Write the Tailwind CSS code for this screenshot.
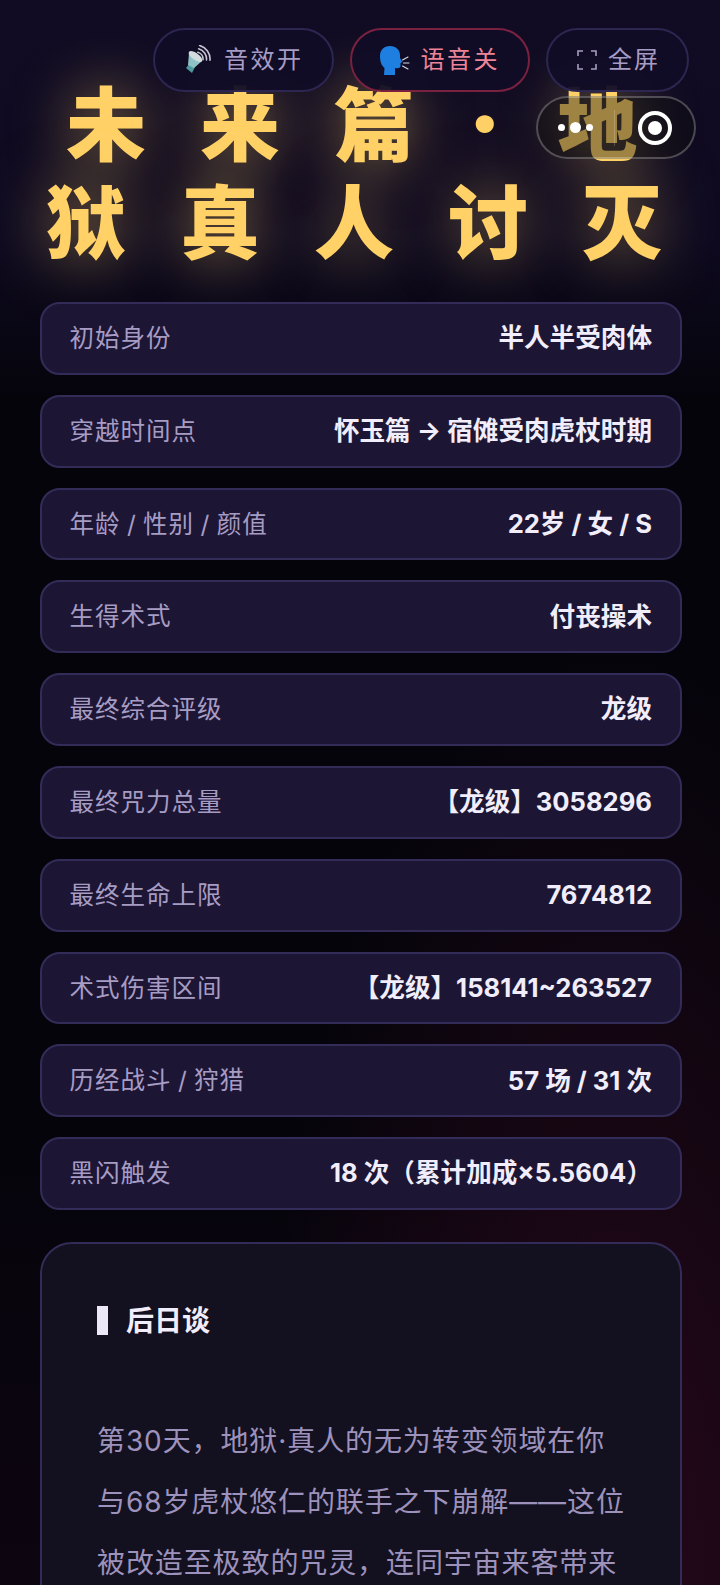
<!DOCTYPE html>
<html lang="zh-CN">
<head>
  <meta charset="UTF-8" />
  <meta name="viewport" content="width=device-width, initial-scale=1.0"/>
  <title>未来篇·地狱真人讨灭</title>
  <script src="https://cdn.jsdelivr.net/npm/@tailwindcss/browser@4"></script>
</head>
<body class="bg-[#05040b]">
<div class="relative w-[720px] h-[1585px] overflow-hidden font-['Inter','Noto_Sans_CJK_SC',sans-serif] bg-[radial-gradient(ellipse_at_85%_100%,#26081a_0%,rgba(38,8,20,0)_42%),linear-gradient(180deg,#110c24_0px,#0e0a20_240px,#05040b_400px,#05040b_1150px,#0d0510_1585px)]">

  <!-- top buttons -->
  <div class="absolute top-[28px] right-[31px] z-20 flex gap-[16px]">
    <button class="h-[64px] px-[28px] flex items-center gap-[11px] rounded-full border-2 border-[#2c2650] bg-[#110d26]/95 text-[#a79cc4] text-[24px] tracking-[2.5px]">
      <svg class="w-[30px] h-[30px]" viewBox="5 4 30 30" fill="none">
        <path d="M8 27 L12 22 L17 26 L14 32 Z" fill="#4f9aa0"/>
        <path d="M11 12 L24 20 L16 27 L10 24 Z" fill="#8fc2c6"/>
        <ellipse cx="17.5" cy="15.5" rx="8" ry="3.5" transform="rotate(35 17.5 15.5)" fill="#d2dcdf"/>
        <path d="M19.8 11.2 A7 7 0 0 1 25 18.6 M20.7 7.8 A10.5 10.5 0 0 1 28.5 18.9 M21.6 4.5 A14 14 0 0 1 32 19.2" stroke="#c8c4d4" stroke-width="1.6" stroke-linecap="round"/>
      </svg>
      音效开
    </button>
    <button class="h-[64px] px-[28px] flex items-center gap-[11px] rounded-full border-2 border-[#7a2140] bg-[#110d26]/95 text-[#ee8498] text-[24px] tracking-[2.5px]">
      <svg class="w-[30px] h-[30px]" viewBox="5 4 30 30" fill="none">
        <path d="M15 5 C21 5 25 9 25 14 L25 17 L27.5 21 L25.5 22 L25.5 25 C25.5 27 23 27.5 20 27 L20 34 L9 34 L9.5 27 C6 24 5 20 5 15 C5 9 9 5 15 5 Z" fill="#1f7fe0"/>
        <path d="M27.5 19 L33 16 M28.5 22 L34 22 M27.5 25 L33 28" stroke="#d4dbe6" stroke-width="1.1" stroke-linecap="round"/>
      </svg>
      语音关
    </button>
    <button class="h-[64px] w-[143px] pl-[28px] flex items-center gap-[10px] rounded-full border-2 border-[#2c2650] bg-[#110d26]/95 text-[#a79cc4] text-[24px] tracking-[2px]">
      <svg class="w-[22px] h-[22px]" viewBox="0 0 22 22" fill="none" stroke="#a79cc4" stroke-width="1.6">
        <path d="M2 7 V2 H7 M15 2 H20 V7 M20 15 V20 H15 M7 20 H2 V15"/>
      </svg>
      全屏
    </button>
  </div>

  <!-- wechat capsule -->
  <div class="absolute top-[96px] left-[536px] z-30 w-[160px] h-[63px] rounded-full border-2 border-white/25 bg-[#101010]/40 flex items-center">
    <div class="w-[74px] pr-[4px] flex items-center justify-center gap-[5px] ml-[2px]">
      <span class="w-[7px] h-[7px] rounded-full bg-white"></span>
      <span class="w-[11px] h-[11px] rounded-full bg-white"></span>
      <span class="w-[7px] h-[7px] rounded-full bg-white"></span>
    </div>
    <div class="w-px h-[36px] bg-white/20"></div>
    <div class="flex-1 flex justify-center">
      <div class="w-[34px] h-[34px] rounded-full border-[4px] border-white flex items-center justify-center">
        <span class="w-[14px] h-[14px] rounded-full bg-white"></span>
      </div>
    </div>
  </div>

  <!-- title -->
  <h1 class="pt-[74px] h-[302px] text-[#ffd166] text-[80px] leading-[98px] font-black tracking-[54px] whitespace-nowrap [text-shadow:0_0_60px_rgba(255,209,102,0.55)]">
    <div class="pl-[66px]">未来篇<span class="text-[90px] leading-[98px] mr-[2px] align-[-1px]">·</span>地</div>
    <div class="pl-[46px]">狱真人讨灭</div>
  </h1>

  <!-- stat rows -->
  <div class="px-[40px] w-[722px] flex flex-col gap-[20px]">
    <div class="h-[72.8px] pl-[27.5px] pr-[28px] flex items-center justify-between rounded-[20px] border-2 border-[#332c58] bg-[#1c1634]">
      <span class="text-[#a79cc4] text-[24.5px] tracking-[1px] [word-spacing:-1.5px]">初始身份</span>
      <span class="text-[#f1edfb] text-[25.6px] font-bold">半人半受肉体</span>
    </div>
    <div class="h-[72.8px] pl-[27.5px] pr-[28px] flex items-center justify-between rounded-[20px] border-2 border-[#332c58] bg-[#1c1634]">
      <span class="text-[#a79cc4] text-[24.5px] tracking-[1px] [word-spacing:-1.5px]">穿越时间点</span>
      <span class="text-[#f1edfb] text-[25.6px] font-bold">怀玉篇 → 宿傩受肉虎杖时期</span>
    </div>
    <div class="h-[72.8px] pl-[27.5px] pr-[28px] flex items-center justify-between rounded-[20px] border-2 border-[#332c58] bg-[#1c1634]">
      <span class="text-[#a79cc4] text-[24.5px] tracking-[1px] [word-spacing:-1.5px]">年龄 / 性别 / 颜值</span>
      <span class="text-[#f1edfb] text-[25.6px] font-bold">22岁 / 女 / S</span>
    </div>
    <div class="h-[72.8px] pl-[27.5px] pr-[28px] flex items-center justify-between rounded-[20px] border-2 border-[#332c58] bg-[#1c1634]">
      <span class="text-[#a79cc4] text-[24.5px] tracking-[1px] [word-spacing:-1.5px]">生得术式</span>
      <span class="text-[#f1edfb] text-[25.6px] font-bold">付丧操术</span>
    </div>
    <div class="h-[72.8px] pl-[27.5px] pr-[28px] flex items-center justify-between rounded-[20px] border-2 border-[#332c58] bg-[#1c1634]">
      <span class="text-[#a79cc4] text-[24.5px] tracking-[1px] [word-spacing:-1.5px]">最终综合评级</span>
      <span class="text-[#f1edfb] text-[25.6px] font-bold">龙级</span>
    </div>
    <div class="h-[72.8px] pl-[27.5px] pr-[28px] flex items-center justify-between rounded-[20px] border-2 border-[#332c58] bg-[#1c1634]">
      <span class="text-[#a79cc4] text-[24.5px] tracking-[1px] [word-spacing:-1.5px]">最终咒力总量</span>
      <span class="text-[#f1edfb] text-[25.6px] font-bold">【龙级】3058296</span>
    </div>
    <div class="h-[72.8px] pl-[27.5px] pr-[28px] flex items-center justify-between rounded-[20px] border-2 border-[#332c58] bg-[#1c1634]">
      <span class="text-[#a79cc4] text-[24.5px] tracking-[1px] [word-spacing:-1.5px]">最终生命上限</span>
      <span class="text-[#f1edfb] text-[25.6px] font-bold">7674812</span>
    </div>
    <div class="h-[72.8px] pl-[27.5px] pr-[28px] flex items-center justify-between rounded-[20px] border-2 border-[#332c58] bg-[#1c1634]">
      <span class="text-[#a79cc4] text-[24.5px] tracking-[1px] [word-spacing:-1.5px]">术式伤害区间</span>
      <span class="text-[#f1edfb] text-[25.6px] font-bold">【龙级】158141~263527</span>
    </div>
    <div class="h-[72.8px] pl-[27.5px] pr-[28px] flex items-center justify-between rounded-[20px] border-2 border-[#332c58] bg-[#1c1634]">
      <span class="text-[#a79cc4] text-[24.5px] tracking-[1px] [word-spacing:-1.5px]">历经战斗 / 狩猎</span>
      <span class="text-[#f1edfb] text-[25.6px] font-bold">57 场 / 31 次</span>
    </div>
    <div class="h-[72.8px] pl-[27.5px] pr-[28px] flex items-center justify-between rounded-[20px] border-2 border-[#332c58] bg-[#1c1634]">
      <span class="text-[#a79cc4] text-[24.5px] tracking-[1px] [word-spacing:-1.5px]">黑闪触发</span>
      <span class="text-[#f1edfb] text-[25.6px] font-bold">18 次（累计加成×5.5604）</span>
    </div>
  </div>

  <!-- after story card -->
  <div class="mx-[40px] w-[642px] mt-[32px] h-[500px] pl-[55px] pr-[50px] pt-[57px] rounded-[32px] border-2 border-[#332c58] bg-[#13101f]">
    <div class="flex items-center gap-[18px] h-[40px] text-[#f1edfb] text-[28px] font-bold">
      <span class="w-[11px] h-[29px] bg-[#ece8f8]"></span>
      后日谈
    </div>
    <p class="mt-[70px] text-[#9d92bc] text-[28px] leading-[60.8px] tracking-[0.9px]">第30天，地狱·真人的无为转变领域在你与68岁虎杖悠仁的联手之下崩解——这位被改造至极致的咒灵，连同宇宙来客带来</p>
  </div>
</div>
</body>
</html>
